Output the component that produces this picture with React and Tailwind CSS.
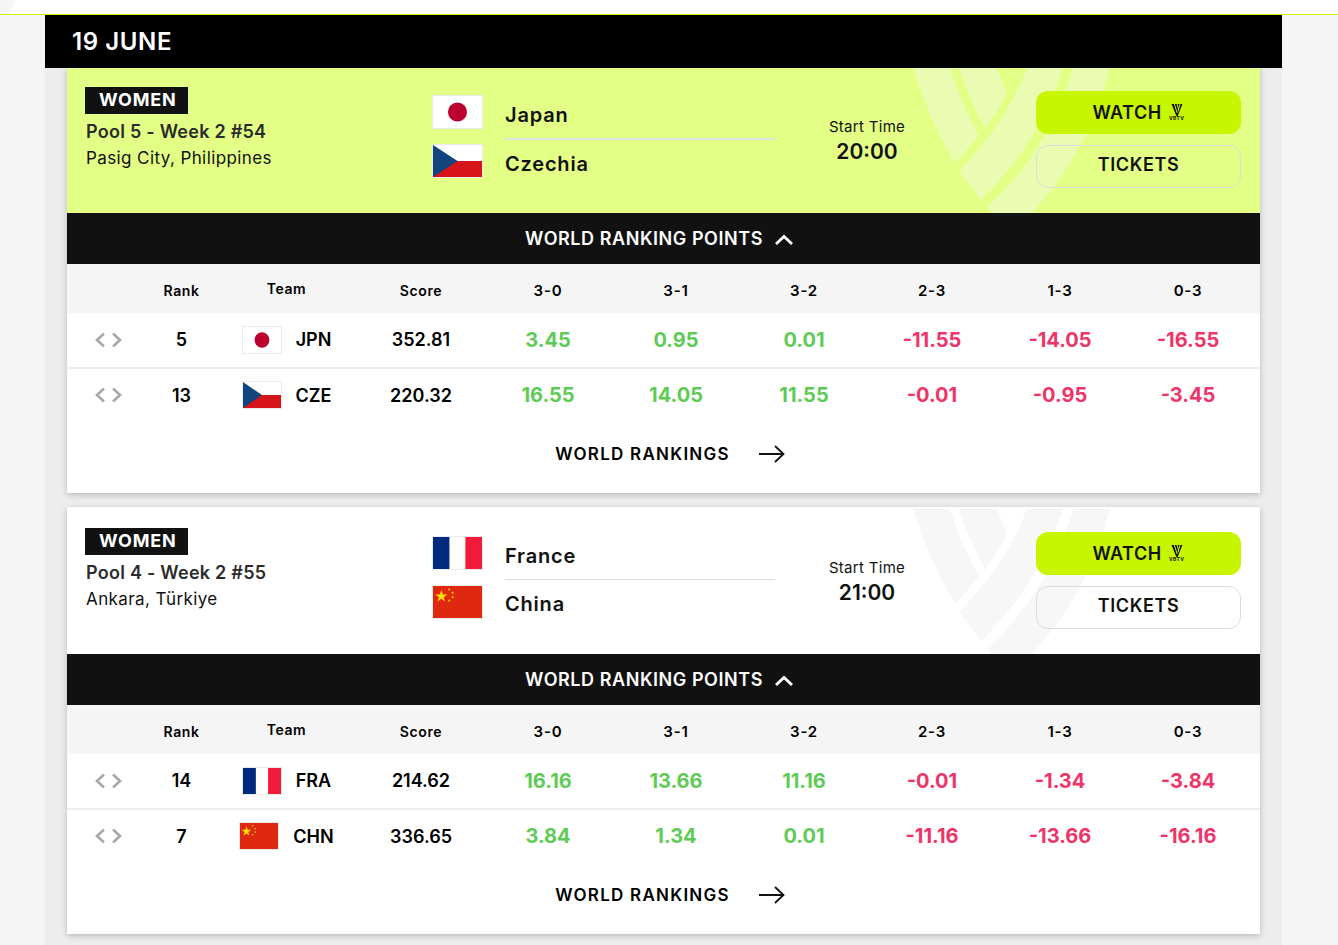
const FONT = 'font-["Inter","Liberation_Sans",sans-serif]';

const MATCHES = [
  {
    pool: 'Pool 5 - Week 2 #54',
    place: 'Pasig City, Philippines',
    time: '20:00',
    live: true,
    home: { name: 'Japan', code: 'JPN', rank: 5, score: '352.81', flag: 'jp', pts: ['3.45', '0.95', '0.01', '-11.55', '-14.05', '-16.55'] },
    away: { name: 'Czechia', code: 'CZE', rank: 13, score: '220.32', flag: 'cz', pts: ['16.55', '14.05', '11.55', '-0.01', '-0.95', '-3.45'] },
  },
  {
    pool: 'Pool 4 - Week 2 #55',
    place: 'Ankara, Türkiye',
    time: '21:00',
    live: false,
    home: { name: 'France', code: 'FRA', rank: 14, score: '214.62', flag: 'fr', pts: ['16.16', '13.66', '11.16', '-0.01', '-1.34', '-3.84'] },
    away: { name: 'China', code: 'CHN', rank: 7, score: '336.65', flag: 'cn', pts: ['3.84', '1.34', '0.01', '-11.16', '-13.66', '-16.16'] },
  },
];

const RESULTS = ['3-0', '3-1', '3-2', '2-3', '1-3', '0-3'];

function Flag({ code, className }) {
  return (
    <svg viewBox="0 0 50 33" preserveAspectRatio="none" className={`block border border-[#ebebeb] ${className}`}>
      {code === 'jp' && (
        <>
          <rect width="50" height="33" fill="#fff" />
          <circle cx="25" cy="16.5" r="9.7" fill="#bc002d" />
        </>
      )}
      {code === 'cz' && (
        <>
          <rect width="50" height="16.5" fill="#fff" />
          <rect y="16.5" width="50" height="16.5" fill="#d7141a" />
          <path d="M0 0 L25 16.5 L0 33 Z" fill="#11457e" />
        </>
      )}
      {code === 'fr' && (
        <>
          <rect width="17" height="33" fill="#002a7f" />
          <rect x="17" width="16" height="33" fill="#fff" />
          <rect x="33" width="17" height="33" fill="#f31b3c" />
        </>
      )}
      {code === 'cn' && (
        <>
          <rect width="50" height="33" fill="#de2910" />
          <path d="M8.5 4 L10 8.7 L14.8 8.7 L10.9 11.5 L12.4 16 L8.5 13.2 L4.6 16 L6.1 11.5 L2.2 8.7 L7 8.7 Z" fill="#ffde00" />
          <circle cx="16.5" cy="3.5" r="1" fill="#ffde00" />
          <circle cx="20" cy="7" r="1" fill="#ffde00" />
          <circle cx="20" cy="11.5" r="1" fill="#ffde00" />
          <circle cx="16.5" cy="15" r="1" fill="#ffde00" />
        </>
      )}
    </svg>
  );
}

function Watermark({ className }) {
  return (
    <svg viewBox="900 66 220 147" className={`absolute left-[833px] top-0 w-[220px] h-[147px] ${className}`}>
      <path d="M913 68 L950 68 Q962 105 979 136 L955 163 Q928 118 913 68 Z" />
      <path d="M959 68 L997 68 L1007 93 Q998 112 985 128 Q969 100 959 68 Z" />
      <path d="M1027 68 L1063 68 Q1040 142 981 200 L959 171 Q1005 125 1027 68 Z" />
      <path d="M1073 68 L1110 68 Q1090 150 1032 213 L992 213 L987 207 Q1050 150 1073 68 Z" />
    </svg>
  );
}

function VbtvMark() {
  return (
    <span className="flex flex-col items-center w-[16px] mb-[1px]">
      <svg viewBox="0 0 12 12" className="w-[12px] h-[12px]">
        <path d="M0.5 0 H11.5 L6.6 12 H5.4 Z" fill="#111" />
        <path d="M3 -1 L6.2 9 M5.8 -1 L7.6 5.5 M9.4 -1 L6.9 7.5" fill="none" stroke="#c8f500" strokeWidth="1" />
      </svg>
      <span className="text-[5px] leading-[5px] font-bold tracking-[0.4px] text-[#111]">VBTV</span>
    </span>
  );
}

function Arrows() {
  return (
    <div className="flex justify-end gap-[7px] pr-[26px] text-[#a8a8a8]">
      <svg viewBox="0 0 10 16" className="w-[10px] h-[16px]" fill="none" stroke="currentColor" strokeWidth="2.6"><path d="M9 1.5 L2 8 L9 14.5" /></svg>
      <svg viewBox="0 0 10 16" className="w-[10px] h-[16px]" fill="none" stroke="currentColor" strokeWidth="2.6"><path d="M1 1.5 L8 8 L1 14.5" /></svg>
    </div>
  );
}

function TeamRow({ team, border }) {
  return (
    <div className={`grid grid-cols-[81px_67px_143px_126px_repeat(6,128px)] pr-2 items-center h-[56px] text-[18px] font-semibold text-black ${border ? 'border-b-2 border-[#eeeeee] pb-[1px]' : 'pb-[4px]'}`}>
      <Arrows />
      <div className="text-center">{team.rank}</div>
      <div className="flex items-center justify-center gap-[14px]">
        <Flag code={team.flag} className="w-[40px] h-[28px]" />
        <span>{team.code}</span>
      </div>
      <div className="text-center">{team.score}</div>
      {team.pts.map((p, i) => (
        <div key={i} className={`text-center text-[20px] font-bold ${p.startsWith('-') ? 'text-[#ee3468]' : 'text-[#5fcb57]'}`}>{p}</div>
      ))}
    </div>
  );
}

function MatchCard({ match, className = '' }) {
  const { live } = match;
  return (
    <div className={`bg-white shadow-[0_2px_6px_rgba(0,0,0,0.22)] ${className}`}>
      <div className={`relative overflow-hidden flex h-[147px] ${live ? 'bg-[#e3ff85]' : 'bg-white'}`}>
        <Watermark className={live ? 'fill-[#ecfbb2]' : 'fill-[#f7f7f7]'} />
        <div className="relative w-[365px] pl-[18px] pt-[21px]">
          <div className="w-[103px] h-[27px] pl-[14px] bg-[#111111] text-white text-[18px] leading-[25px] font-bold tracking-[0.8px]">WOMEN</div>
          <div className="mt-[5px] pl-px text-[#2b2b2b] text-[18px] leading-[26px] font-semibold tracking-[0.25px]">{match.pool}</div>
          <div className="pl-px text-[#111] text-[17px] leading-[26px] tracking-[0.4px]">{match.place}</div>
        </div>
        <div className="relative flex flex-col gap-[15px] pt-[29px] w-[73px]">
          <Flag code={match.home.flag} className="w-[51px] h-[34px]" />
          <Flag code={match.away.flag} className="w-[51px] h-[34px]" />
        </div>
        <div className="relative w-[270px] pt-[33px] text-[#111] text-[20px] font-semibold tracking-[0.8px]">
          <div className="h-[39px] pt-[2px] leading-[28px]">{match.home.name}</div>
          <div className={`h-[38px] pt-[10px] leading-[28px] border-t-[#e2e2e2] ${live ? 'border-t-2' : 'border-t'}`}>{match.away.name}</div>
        </div>
        <div className="relative w-[184px] pt-[50px] text-center text-[#111]">
          <div className="text-[15px] leading-[22px] tracking-[0.3px]">Start Time</div>
          <div className="text-[21px] leading-[27px] font-semibold">{match.time}</div>
        </div>
        <div className="relative ml-auto mr-[19px] w-[205px] pt-[25px] flex flex-col gap-[11px] text-[18px] font-semibold text-[#111] tracking-[0.5px]">
          <a className="h-[43px] rounded-[12px] bg-[#c8f500] flex items-center justify-center gap-[7px]">WATCH <VbtvMark /></a>
          <a className="h-[43px] rounded-[12px] border border-[#dddddd] flex items-center justify-center tracking-[0.6px] pb-1">TICKETS</a>
        </div>
      </div>

      <div className="h-[51px] pr-[9px] bg-[#111111] text-white flex items-center justify-center gap-[12px] text-[18px] font-semibold tracking-[0.55px]">
        WORLD RANKING POINTS
        <svg viewBox="0 0 18 11" className="w-[18px] h-[11px] mt-[2px]" fill="none" stroke="currentColor" strokeWidth="2.8"><path d="M1 10 L9 2.5 L17 10" /></svg>
      </div>

      <div className="grid grid-cols-[81px_67px_143px_126px_repeat(6,128px)] pr-2 pt-[3px] items-center h-[49px] bg-[#f5f5f5] text-[14px] font-semibold text-black tracking-[0.6px]">
        <div />
        <div className="text-center">Rank</div>
        <div className="text-center mb-1">Team</div>
        <div className="text-center">Score</div>
        {RESULTS.map(r => <div key={r} className="text-center text-[15px] tracking-[0.8px] mt-[2px]">{r}</div>)}
      </div>

      <TeamRow team={match.home} border />
      <TeamRow team={match.away} />

      <div className="h-[68px] flex items-start pt-[8px] pl-[13px] justify-center gap-[29px] text-[17px] font-semibold text-black tracking-[1.25px]">
        <span className="leading-[42px]">WORLD RANKINGS</span>
        <svg viewBox="0 0 26 18" className="w-[26px] h-[18px] mt-[12px]" fill="none" stroke="#111" strokeWidth="1.8"><path d="M0 9 L24 9 M16 1 L24.5 9 L16 17" /></svg>
      </div>
    </div>
  );
}

export default function App() {
  return (
    <div className={`relative min-h-[945px] bg-[#f5f5f5] ${FONT}`}>
      <div className="h-[14px] bg-white" />
      <div className="h-px bg-[#d4f000]" />
      <div className="ml-[45px] w-[1237px] bg-[#ededed] pb-[11px]">
        <div className="relative z-10 h-[53px] bg-black text-white flex items-center pl-[27px] text-[24px] font-semibold tracking-[0.6px]">19 JUNE</div>
        <div className="px-[22px] -mt-[2px]">
          <MatchCard match={MATCHES[0]} />
          <MatchCard match={MATCHES[1]} className="mt-[14px]" />
        </div>
      </div>
      <svg viewBox="0 0 16 14" className="absolute left-0 top-0 w-[16px] h-[14px]"><path d="M0 14 L8 14 L16 0 L0 0 Z" fill="#f5f5f5" /></svg>
    </div>
  );
}
